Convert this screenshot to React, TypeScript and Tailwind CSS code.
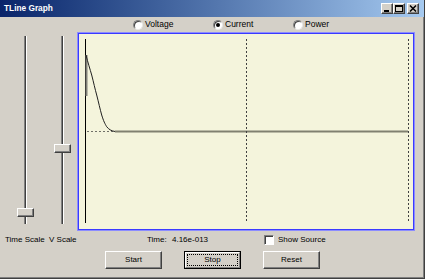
import React from "react";

const face = "bg-[#d4d0c8]";

function TitleButton({ kind, className }: { kind: "min" | "max" | "close"; className?: string }) {
  return (
    <div
      className={`w-[12px] h-[11px] ${face} border border-t-white border-l-white border-r-[#404040] border-b-[#404040] shadow-[inset_-1px_-1px_0_#808080] flex items-center justify-center ${className ?? ""}`}
    >
      <svg width="8" height="7" viewBox="0 0 8 7">
        {kind === "min" && <rect x="1" y="5" width="5" height="2" fill="#000" />}
        {kind === "max" && (
          <>
            <rect x="0.5" y="0.5" width="7" height="6" fill="none" stroke="#000" />
            <rect x="0" y="0" width="8" height="2" fill="#000" />
          </>
        )}
        {kind === "close" && (
          <path d="M1 0.5 L7 6.5 M7 0.5 L1 6.5" stroke="#000" strokeWidth="1.5" />
        )}
      </svg>
    </div>
  );
}

function Radio({ label, checked }: { label: string; checked?: boolean }) {
  return (
    <div className="w-[80px] flex items-center gap-[2px]">
      <div className="w-[10px] h-[10px] rounded-full bg-white border border-t-[#808080] border-l-[#808080] border-r-[#e8e8e8] border-b-[#e8e8e8] shadow-[inset_1px_1px_0_#404040] flex items-center justify-center">
        {checked && <div className="w-[4px] h-[4px] rounded-full bg-black" />}
      </div>
      <span className="text-[8.5px] text-black">{label}</span>
    </div>
  );
}

function Slider({ thumbTop, className }: { thumbTop: number; className?: string }) {
  return (
    <div className={`relative w-[17px] h-[188px] mt-[4px] flex justify-center ${className ?? ""}`}>
      <div className="w-[3px] h-full bg-[#404040] border-l border-l-[#808080] border-r border-r-white" />
      <div
        className={`absolute left-0 w-[17px] h-[9px] ${face} border border-t-white border-l-white border-r-[#404040] border-b-[#404040] shadow-[inset_-1px_-1px_0_#808080]`}
        style={{ top: thumbTop }}
      />
    </div>
  );
}

function Button({ label, focused }: { label: string; focused?: boolean }) {
  if (focused) {
    return (
      <div className="w-[57px] h-[18px] border border-black">
        <div className={`w-full h-full ${face} border border-t-white border-l-white border-r-[#808080] border-b-[#808080] p-[1px]`}>
          <div className="w-full h-full border border-dotted border-black flex items-center justify-center text-[8px] text-black">
            {label}
          </div>
        </div>
      </div>
    );
  }
  return (
    <div
      className={`w-[57px] h-[18px] ${face} border border-t-white border-l-white border-r-[#404040] border-b-[#404040] shadow-[inset_-1px_-1px_0_#808080] flex items-center justify-center text-[8px] text-black`}
    >
      {label}
    </div>
  );
}

function Graph() {
  // coordinates relative to inside of the plot frame
  const curve = "M8 22 C10 30 12 36 13.7 42 C15.5 49 17 56 18.7 62 C20.5 69 22 76 23.7 82 C25.5 88 27 91 28.7 93.7 C31 96.5 33 97.8 37 98.5";
  return (
    <svg width="336" height="197" className="block">
      <line x1="7.5" y1="6" x2="7.5" y2="190" stroke="#000" strokeWidth="1" />
      <line x1="8.5" y1="22" x2="8.5" y2="63" stroke="#808078" strokeWidth="2" />
      <line x1="9" y1="98.5" x2="37" y2="98.5" stroke="#707068" strokeWidth="1" strokeDasharray="2 2" />
      <line x1="37" y1="98.5" x2="330" y2="98.5" stroke="#808070" strokeWidth="2" />
      <line x1="168.5" y1="6" x2="168.5" y2="189" stroke="#404040" strokeWidth="1" strokeDasharray="2 2" />
      <line x1="330.5" y1="6" x2="330.5" y2="189" stroke="#404040" strokeWidth="1" strokeDasharray="2 2" />
      <path d={curve} fill="none" stroke="#202020" strokeWidth="1" />
    </svg>
  );
}

export default function App() {
  return (
    <div
      className={`w-[425px] h-[279px] ${face} flex flex-col border-r border-b border-r-[#404040] border-b-[#404040] shadow-[inset_-1px_-1px_0_#808080] font-['Liberation_Sans',Arial,sans-serif] overflow-hidden`}
    >
      {/* title bar */}
      <div className="h-[17px] shrink-0 bg-gradient-to-r from-[#0a246a] to-[#a6caf0] flex items-center pl-[4px] pr-[5px]">
        <span className="text-white font-bold text-[8.3px] flex-1">TLine Graph</span>
        <TitleButton kind="min" />
        <TitleButton kind="max" />
        <TitleButton kind="close" className="ml-[2px]" />
      </div>

      {/* radio row */}
      <div className="h-[15px] shrink-0 flex items-center pl-[133px]">
        <Radio label="Voltage" />
        <Radio label="Current" checked />
        <Radio label="Power" />
      </div>

      {/* sliders + plot */}
      <div className="h-[199px] shrink-0 flex">
        <div className="w-[77px] flex">
          <Slider thumbTop={172} className="ml-[17px]" />
          <Slider thumbTop={108} className="ml-[20px]" />
        </div>
        <div className="w-[338px] h-[199px] bg-[#f4f4dc] border border-[#8c8cff] shadow-[inset_0_0_0_1px_#3a3aff] box-border">
          <Graph />
        </div>
      </div>

      {/* labels row */}
      <div className="h-[17px] shrink-0 flex items-center text-[8px] text-black">
        <span className="ml-[5px] w-[41px]">Time Scale</span>
        <span className="ml-[3px] w-[28px]">V Scale</span>
        <span className="ml-[70px] w-[25px]">Time:</span>
        <span className="w-[37px]">4.16e-013</span>
        <div className="ml-[55px] w-[10px] h-[10px] bg-white border border-t-[#808080] border-l-[#808080] border-r-white border-b-white shadow-[inset_1px_1px_0_#404040]" />
        <span className="ml-[4px]">Show Source</span>
      </div>

      {/* buttons row */}
      <div className="mt-[3px] flex pl-[105px] gap-[22px]">
        <Button label="Start" />
        <Button label="Stop" focused />
        <Button label="Reset" />
      </div>
    </div>
  );
}
